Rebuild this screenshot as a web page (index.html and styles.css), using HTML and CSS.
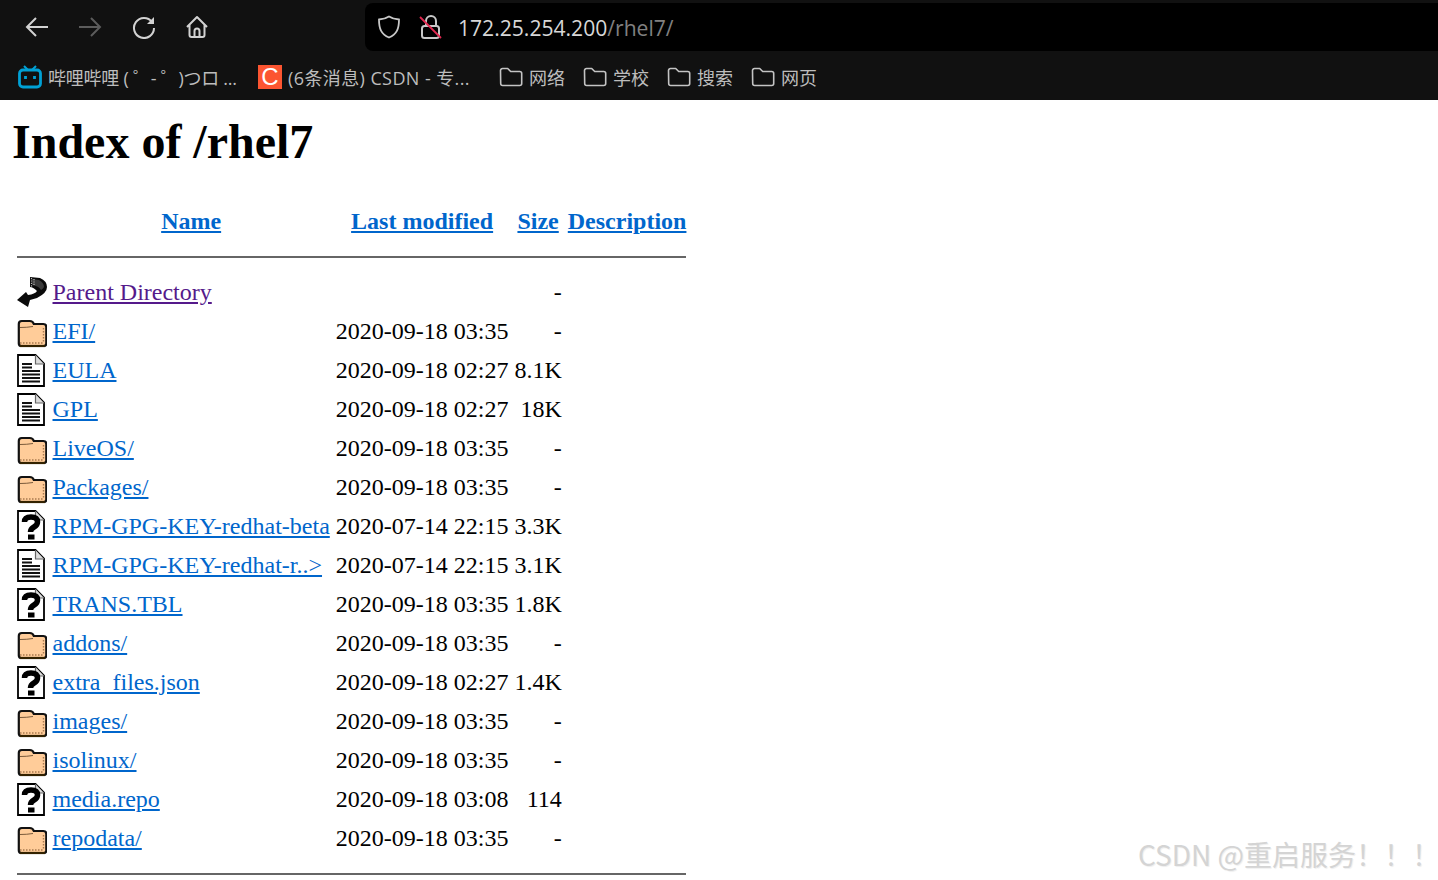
FILE: index.html
```html
<!DOCTYPE html>
<html lang="en">
<head>
    <meta charset="UTF-8" />
    <title>Index of /rhel7</title>
    <link rel="stylesheet" href="styles.css">
</head>
<body>
    <svg class="icon-defs" width="0" height="0">
        <defs>
            <symbol id="bm-folder" viewBox="0 0 24 24">
                <path d="M1.500 5.500a2 2 0 0 1 2-2h5.200l3 3h9a2 2 0 0 1 2 2v10a2 2 0 0 1-2 2h-17a2 2 0 0 1-2-2z" fill="none" stroke="currentColor" stroke-width="1.600" stroke-linejoin="round" />
            </symbol>
            <symbol id="ic-back" viewBox="0 0 30 33">
                <path d="M13 1L23 2Q30 5 30 11Q30 17 20 22L13 24L11 31L0 24L9 16L11 19Q18 18 20 15Q16 11 13 11Z" fill="#0a0a0a" />
                <path d="M15 3L22 4Q27 7 27 11Q26 13 24 14Q22 10 15 9Z" fill="#3a3a3a" />
                <path d="M14.500 2v9M17 3v7" stroke="#bbb" stroke-width="1.200" stroke-dasharray="1.200 1.200" />
            </symbol>
            <symbol id="ic-folder" viewBox="0 0 30 33">
                <path d="M1.800 9q0-3 3-3h8q3 0 4 3h9.500q3 0 3 3v16.500q0 2.500-2.500 2.500H4.300q-2.500 0-2.500-2.500z" fill="#ffcc99" stroke="#111" stroke-width="2.200" />
                <path d="M3 12.500q7 0 13-1" fill="none" stroke="#7a5a3a" stroke-width="1" />
                <path d="M3 28h24M26.500 13v15" stroke="#a8794f" stroke-width="1.400" stroke-dasharray="1.500 1.500" />
                <path d="M3 31h25" stroke="#332200" stroke-width="2.200" />
            </symbol>
            <symbol id="ic-text" viewBox="0 0 30 33">
                <path d="M1 1H18.500L27 9.500V32H1z" fill="#fff" stroke="#000" stroke-width="1.800" />
                <path d="M18.500 1V10H27" fill="#ddd" stroke="#666" stroke-width="1.200" />
                <path d="M5 10h10M5 13.500h10M5 17h18M5 20.500h18M5 24h18M5 27.500h18" stroke="#111" stroke-width="2" />
            </symbol>
            <symbol id="ic-unknown" viewBox="0 0 30 33">
                <path d="M1 1H18.500L27 9.500V32H1z" fill="#fff" stroke="#000" stroke-width="1.800" />
                <path d="M18.500 1V10H27" fill="#ddd" stroke="#666" stroke-width="1.200" />
                <path d="M7.500 12q0-5 6.500-5t6.500 5q0 3-3.500 5t-3.500 5" fill="none" stroke="#000" stroke-width="5.500" />
                <rect x="11" y="24.500" width="6.500" height="5" fill="#000" />
            </symbol>
        </defs>
    </svg>

    <header class="browser">
        <div class="toolbar">
            <button class="tool-btn">
                <svg width="24" height="24" viewBox="0 0 24 24" fill="none" stroke="#d2d2d2" stroke-width="2"><path d="M23 12H2M11 3l-9 9 9 9" /></svg>
            </button>
            <button class="tool-btn">
                <svg width="24" height="24" viewBox="0 0 24 24" fill="none" stroke="#5c5c5c" stroke-width="2"><path d="M1 12h21M13 3l9 9-9 9" /></svg>
            </button>
            <button class="tool-btn">
                <svg width="24" height="24" viewBox="0 0 24 24" fill="none" stroke="#d2d2d2" stroke-width="2"><path d="M20 7a10 10 0 1 0 2 6" /><path d="M22 2v7h-7z" fill="#d2d2d2" stroke="none" /></svg>
            </button>
            <button class="tool-btn">
                <svg width="24" height="24" viewBox="0 0 24 24" fill="none" stroke="#d2d2d2" stroke-width="2" stroke-linejoin="round"><path d="M2 12L12 2l10 10M4.500 10v10a2 2 0 0 0 2 2h11a2 2 0 0 0 2-2V10M9.500 22v-6a2.500 2.500 0 0 1 5 0v6" /></svg>
            </button>
            <div class="urlbar">
                <svg class="url-shield" width="24" height="24" viewBox="0 0 24 24" fill="none" stroke="#c8c8c8" stroke-width="1.800"><path d="M12 1.500c3 2 6 2.800 10 3 0 9-2 14.500-10 18-8-3.500-10-9-10-18 4-.2 7-1 10-3z" /></svg>
                <svg class="url-lock" width="24" height="26" viewBox="0 0 24 26" fill="none" stroke="#c8c8c8" stroke-width="2"><path d="M7 11V7a5 5 0 0 1 10 0v4" /><rect x="3" y="12" width="17" height="12" rx="2.500" /><path d="M1 3l21 21" stroke="#e22850" stroke-width="1.800" /></svg>
                <span class="url-host">172.25.254.200</span><span class="url-path">/rhel7/</span>
            </div>
        </div>
        <nav class="bookmarks">
            <a class="bookmark">
                <svg class="bm-icon" viewBox="0 0 24 24"><path d="M6 1l4 4h4l4-4" fill="none" stroke="#00a1d6" stroke-width="2" /><rect x="1.500" y="5" width="21" height="17" rx="3.500" fill="none" stroke="#00a1d6" stroke-width="2.800" /><path d="M7.500 11v3M16.500 11v3" stroke="#00a1d6" stroke-width="2.800" /></svg>
                <span class="bm-title bm-title-bili">哔哩哔哩 ( ゜- ゜)つロ ...</span>
            </a>
            <a class="bookmark">
                <span class="csdn-logo">C</span>
                <span class="bm-title bm-title-csdn">(6条消息) CSDN - 专...</span>
            </a>
            <a class="bookmark"><svg class="bm-icon"><use href="#bm-folder" /></svg><span class="bm-title">网络</span></a>
            <a class="bookmark"><svg class="bm-icon"><use href="#bm-folder" /></svg><span class="bm-title">学校</span></a>
            <a class="bookmark"><svg class="bm-icon"><use href="#bm-folder" /></svg><span class="bm-title">搜索</span></a>
            <a class="bookmark"><svg class="bm-icon"><use href="#bm-folder" /></svg><span class="bm-title">网页</span></a>
        </nav>
    </header>

    <main class="listing">
        <h1>Index of /rhel7</h1>
        <table>
            <tr>
                <th></th>
                <th><a href="#">Name</a></th>
                <th><a href="#">Last modified</a></th>
                <th><a href="#">Size</a></th>
                <th><a href="#">Description</a></th>
            </tr>
            <tr><th colspan="5"><hr></th></tr>
            <tr>
                <td class="ico"><svg class="file-icon"><use href="#ic-back" /></svg></td>
                <td><a href="#" class="visited">Parent Directory</a></td>
                <td>&nbsp;</td>
                <td class="size">-</td>
                <td>&nbsp;</td>
            </tr>
            <tr><td class="ico"><svg class="file-icon"><use href="#ic-folder" /></svg></td><td><a href="#">EFI/</a></td><td>2020-09-18 03:35</td><td class="size">-</td><td>&nbsp;</td></tr>
            <tr><td class="ico"><svg class="file-icon"><use href="#ic-text" /></svg></td><td><a href="#">EULA</a></td><td>2020-09-18 02:27</td><td class="size">8.1K</td><td>&nbsp;</td></tr>
            <tr><td class="ico"><svg class="file-icon"><use href="#ic-text" /></svg></td><td><a href="#">GPL</a></td><td>2020-09-18 02:27</td><td class="size">18K</td><td>&nbsp;</td></tr>
            <tr><td class="ico"><svg class="file-icon"><use href="#ic-folder" /></svg></td><td><a href="#">LiveOS/</a></td><td>2020-09-18 03:35</td><td class="size">-</td><td>&nbsp;</td></tr>
            <tr><td class="ico"><svg class="file-icon"><use href="#ic-folder" /></svg></td><td><a href="#">Packages/</a></td><td>2020-09-18 03:35</td><td class="size">-</td><td>&nbsp;</td></tr>
            <tr><td class="ico"><svg class="file-icon"><use href="#ic-unknown" /></svg></td><td><a href="#">RPM-GPG-KEY-redhat-beta</a></td><td>2020-07-14 22:15</td><td class="size">3.3K</td><td>&nbsp;</td></tr>
            <tr><td class="ico"><svg class="file-icon"><use href="#ic-text" /></svg></td><td><a href="#">RPM-GPG-KEY-redhat-r..&gt;</a></td><td>2020-07-14 22:15</td><td class="size">3.1K</td><td>&nbsp;</td></tr>
            <tr><td class="ico"><svg class="file-icon"><use href="#ic-unknown" /></svg></td><td><a href="#">TRANS.TBL</a></td><td>2020-09-18 03:35</td><td class="size">1.8K</td><td>&nbsp;</td></tr>
            <tr><td class="ico"><svg class="file-icon"><use href="#ic-folder" /></svg></td><td><a href="#">addons/</a></td><td>2020-09-18 03:35</td><td class="size">-</td><td>&nbsp;</td></tr>
            <tr><td class="ico"><svg class="file-icon"><use href="#ic-unknown" /></svg></td><td><a href="#">extra_files.json</a></td><td>2020-09-18 02:27</td><td class="size">1.4K</td><td>&nbsp;</td></tr>
            <tr><td class="ico"><svg class="file-icon"><use href="#ic-folder" /></svg></td><td><a href="#">images/</a></td><td>2020-09-18 03:35</td><td class="size">-</td><td>&nbsp;</td></tr>
            <tr><td class="ico"><svg class="file-icon"><use href="#ic-folder" /></svg></td><td><a href="#">isolinux/</a></td><td>2020-09-18 03:35</td><td class="size">-</td><td>&nbsp;</td></tr>
            <tr><td class="ico"><svg class="file-icon"><use href="#ic-unknown" /></svg></td><td><a href="#">media.repo</a></td><td>2020-09-18 03:08</td><td class="size">114</td><td>&nbsp;</td></tr>
            <tr><td class="ico"><svg class="file-icon"><use href="#ic-folder" /></svg></td><td><a href="#">repodata/</a></td><td>2020-09-18 03:35</td><td class="size">-</td><td>&nbsp;</td></tr>
            <tr><th colspan="5"><hr class="hr-bottom"></th></tr>
        </table>
    </main>

    <div class="watermark">CSDN @重启服务！！！</div>
</body>
</html>
```

FILE: styles.css
```css
* {
    box-sizing: border-box;
}

html, body {
    margin: 0;
    height: 100%;
}

body {
    position: relative;
    overflow: hidden;
    background: #fff;
    color: #000;
    font-family: "Liberation Serif", serif;
    font-size: 24px;
}

.icon-defs {
    position: absolute;
}

/* browser chrome */
.browser {
    height: 100px;
    background: #111;
    font-family: "Open Sans", "Noto Sans CJK SC", sans-serif;
}

.toolbar {
    display: flex;
    align-items: center;
    height: 52px;
    padding: 2px 0 0 10px;
}

.tool-btn {
    display: flex;
    align-items: center;
    justify-content: center;
    width: 53.500px;
    height: 48px;
    padding: 0;
    background: none;
    border: none;
}

.urlbar {
    display: flex;
    align-items: center;
    flex: 1;
    height: 48px;
    margin-left: 141px;
    padding-left: 12px;
    background: #000;
    border-radius: 8px 0 0 8px;
    font-size: 21.100px;
}

.url-shield {
    margin-right: 18px;
}

.url-lock {
    margin-right: 15px;
}

.url-host {
    color: #d7d7d7;
}

.url-path {
    color: #808080;
}

.bookmarks {
    display: flex;
    align-items: center;
    gap: 18px;
    height: 48px;
    padding: 2px 0 0 18px;
    font-size: 18px;
}

.bookmark {
    display: flex;
    align-items: center;
    gap: 6px;
    color: #bdbdbd;
}

.bm-icon {
    width: 24px;
    height: 24px;
    color: #c4c4c4;
}

.bm-title {
    white-space: nowrap;
}

.bm-title-bili {
    width: 192px;
    letter-spacing: -0.250px;
}

.bm-title-csdn {
    width: 193px;
    letter-spacing: 0.400px;
}

.csdn-logo {
    width: 24px;
    height: 24px;
    background: #fc5531;
    color: #fff;
    font-family: "Liberation Sans", sans-serif;
    font-size: 24px;
    line-height: 24px;
    text-align: center;
}

/* directory listing */
.listing {
    padding: 0 12px;
}

h1 {
    margin: 16px 0 35px;
    font-size: 48px;
    line-height: 52px;
}

table {
    border-spacing: 3px;
}

th, td {
    padding: 1.500px;
}

.ico {
    vertical-align: top;
}

.file-icon {
    display: block;
    width: 30px;
    height: 33px;
}

.size {
    text-align: right;
}

a {
    color: #0066cc;
}

a.visited {
    color: #551a8b;
}

hr {
    margin: 15px 0 12px;
    border: none;
    border-top: 2px solid #666;
}

.hr-bottom {
    margin-top: 12px;
}

.watermark {
    position: absolute;
    right: -2px;
    bottom: 6px;
    color: #d4d4d4;
    font-family: "Noto Sans CJK SC", sans-serif;
    font-size: 28px;
    text-shadow: 1px 1px 1px #eee;
}
```
